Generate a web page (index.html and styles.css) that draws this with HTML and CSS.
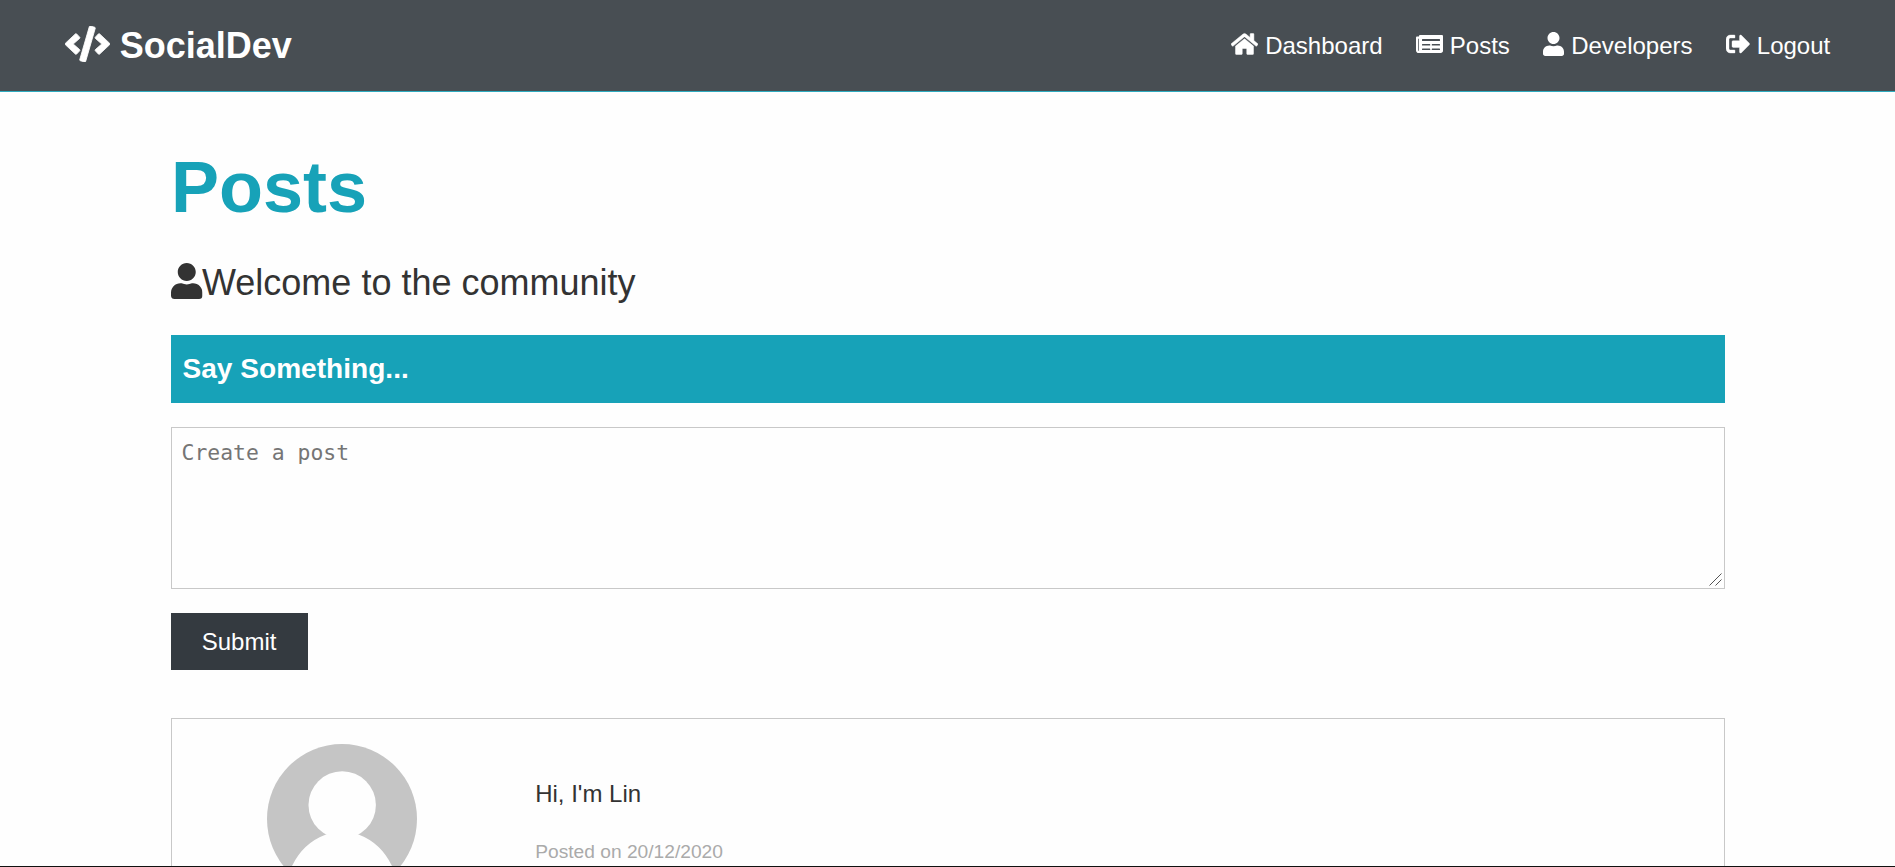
FILE: index.html
```html
<!DOCTYPE html>
<html lang="en">
<head>
<meta charset="utf-8">
<title>SocialDev</title>
<link rel="stylesheet" href="styles.css">
</head>
<body>
<svg class="sprite" aria-hidden="true">
  <symbol id="code" viewBox="0 0 640 512"><path stroke="currentColor" stroke-width="12" d="M278.900 511.500l-61-17.700c-6.400-1.800-10-8.500-8.200-14.900L346.200 8.700c1.800-6.400 8.500-10 14.900-8.200l61 17.700c6.400 1.800 10 8.500 8.200 14.900L293.800 503.300c-1.900 6.400-8.500 10.100-14.900 8.200zm-114-112.200l43.500-46.400c4.600-4.900 4.300-12.700-.8-17.200L117 256l90.600-79.700c5.100-4.500 5.500-12.300.8-17.200l-43.500-46.400c-4.500-4.800-12.100-5.100-17-.5L3.800 247.200c-5.100 4.700-5.100 12.800 0 17.500l144.100 135.100c4.900 4.600 12.500 4.400 17-.5zm327.200.6l144.100-135.100c5.100-4.700 5.100-12.800 0-17.500L492.100 112.100c-4.800-4.500-12.400-4.300-17 .5L431.600 159c-4.600 4.900-4.300 12.700.8 17.200L523 256l-90.600 79.700c-5.100 4.500-5.500 12.300-.8 17.200l43.500 46.400c4.500 4.900 12.100 5.100 17 .6z"/></symbol>
  <symbol id="home" viewBox="0 0 576 512"><path stroke="currentColor" stroke-width="10" d="M280.370 148.260L96 300.110V464a16 16 0 0 0 16 16l112.060-.29a16 16 0 0 0 15.920-16V368a16 16 0 0 1 16-16h64a16 16 0 0 1 16 16v95.640a16 16 0 0 0 16 16.050L464 480a16 16 0 0 0 16-16V300L295.670 148.260a12.190 12.190 0 0 0-15.300 0zM571.600 251.470L488 182.560V44.050a12 12 0 0 0-12-12h-56a12 12 0 0 0-12 12v72.610L318.470 43a48 48 0 0 0-61 0L4.340 251.470a12 12 0 0 0-1.600 16.900l25.500 31A12 12 0 0 0 45.150 301l235.220-193.740a12.190 12.190 0 0 1 15.300 0L530.900 301a12 12 0 0 0 16.900-1.600l25.500-31a12 12 0 0 0-1.700-16.930z"/></symbol>
  <symbol id="news" viewBox="0 0 576 512"><path fill-rule="evenodd" d="M552 64H88c-13.255 0-24 10.745-24 24v8H24c-13.255 0-24 10.745-24 24v272c0 30.928 25.072 56 56 56h472c26.510 0 48-21.490 48-48V88c0-13.255-10.745-24-24-24zM56 400a8 8 0 0 1-8-8V144h16v248a8 8 0 0 1-8 8zM140 150h360q12 0 12 12v18q0 12-12 12H140q-12 0-12-12v-18q0-12 12-12zM136 256h160q8 0 8 8v16q0 8-8 8H136q-8 0-8-8v-16q0-8 8-8zM344 256h160q8 0 8 8v16q0 8-8 8H344q-8 0-8-8v-16q0-8 8-8zM136 352h160q8 0 8 8v16q0 8-8 8H136q-8 0-8-8v-16q0-8 8-8zM344 352h160q8 0 8 8v16q0 8-8 8H344q-8 0-8-8v-16q0-8 8-8z"/></symbol>
  <symbol id="user" viewBox="0 0 448 512"><path d="M224 256c70.700 0 128-57.300 128-128S294.700 0 224 0 96 57.300 96 128s57.300 128 128 128zm89.600 32h-16.700c-22.200 10.200-46.900 16-72.900 16s-50.600-5.800-72.900-16h-16.700C60.200 288 0 348.200 0 422.400V464c0 26.500 21.500 48 48 48h352c26.500 0 48-21.500 48-48v-41.600c0-74.200-60.200-134.400-134.400-134.400z"/></symbol>
  <symbol id="logout" viewBox="0 0 512 512"><path stroke="currentColor" stroke-width="8" d="M497 273L329 441c-15 15-41 4.500-41-17v-96H152c-13.300 0-24-10.700-24-24v-96c0-13.300 10.700-24 24-24h136V88c0-21.400 25.900-32 41-17l168 168c9.300 9.400 9.300 24.600 0 34zM192 436v-40c0-6.600-5.400-12-12-12H96c-17.700 0-32-14.300-32-32V160c0-17.700 14.300-32 32-32h84c6.600 0 12-5.400 12-12V76c0-6.600-5.400-12-12-12H96c-53 0-96 43-96 96v192c0 53 43 96 96 96h84c6.600 0 12-5.400 12-12z"/></symbol>
</svg>

<nav class="navbar">
  <h1 class="brand"><svg class="icon icon-code"><use href="#code"/></svg> SocialDev</h1>
  <ul class="menu">
    <li><a href="#"><svg class="icon icon-wide"><use href="#home"/></svg> Dashboard</a></li>
    <li><a href="#"><svg class="icon icon-wide"><use href="#news"/></svg> Posts</a></li>
    <li><a href="#"><svg class="icon icon-user"><use href="#user"/></svg> Developers</a></li>
    <li><a href="#"><svg class="icon"><use href="#logout"/></svg> Logout</a></li>
  </ul>
</nav>

<main class="container">
  <h1 class="title">Posts</h1>
  <p class="lead"><svg class="icon icon-user"><use href="#user"/></svg>Welcome to the community</p>
  <div class="banner"><h3>Say Something...</h3></div>
  <form class="post-form">
    <div class="field">
      <textarea placeholder="Create a post"></textarea>
      <svg class="grip" viewBox="0 0 13 13"><path d="M.5 12.500L12.500.5M6.500 12.500L12.500 6.500"/></svg>
    </div>
    <button type="button" class="btn">Submit</button>
  </form>
  <article class="post">
    <div class="author">
      <svg class="avatar" viewBox="0 0 150 150">
        <clipPath id="round"><circle cx="75" cy="75" r="75"/></clipPath>
        <g clip-path="url(#round)">
          <rect width="150" height="150" fill="#c5c5c5"/>
          <circle cx="75.200" cy="61" r="33.700" fill="#fefefe"/>
          <path d="M59 90.500Q75 84 91.500 90.500Q114 99 125 122V150H25V122Q36 99 59 90.500Z" fill="#fefefe"/>
        </g>
      </svg>
    </div>
    <div class="body">
      <p class="text">Hi, I'm Lin</p>
      <p class="date">Posted on 20/12/2020</p>
    </div>
  </article>
</main>
<footer class="edge"></footer>
</body>
</html>
```
FILE: styles.css
```css
* { box-sizing: border-box; margin: 0; padding: 0; }
html { font-size: 24px; }
body {
  display: flex;
  flex-direction: column;
  height: 867px;
  overflow: hidden;
  font-family: "Liberation Sans", Arial, sans-serif;
  font-size: 1rem;
  line-height: 1.6;
  color: #333;
  background: #fefefe;
}
.sprite { position: absolute; width: 0; height: 0; }
.icon { width: 1em; height: 1em; fill: currentColor; overflow: visible; vertical-align: -0.085em; }
.icon-code { width: 1.25em; vertical-align: -0.125em; }
.icon-wide { width: 1.125em; margin-left: -0.5px; margin-right: 0.5px; }
.icon-user { width: 0.875em; }

.navbar {
  display: flex;
  flex: none;
  justify-content: space-between;
  align-items: center;
  height: 92px;
  padding: 0 64.8px;
  color: #fff;
  background: #484e53;
  border-bottom: 1px solid #2eabbf;
}
.brand { font-size: 1.5rem; white-space: nowrap; }
.menu { display: flex; gap: 33.6px; padding-top: 2px; list-style: none; }
.menu a { color: #fff; text-decoration: none; white-space: nowrap; }

.container {
  flex: 1;
  min-height: 0;
  width: 1650px;
  margin: 0 auto;
  padding: 52px 47.5px 0 48.5px;
  overflow: hidden;
}
.title { font-size: 3rem; line-height: 1.2; margin-bottom: 24px; color: #17a2b8; }
.lead { font-size: 1.5rem; height: 57px; margin-bottom: 24px; }
.lead .icon { vertical-align: -0.11em; margin-right: -0.5px; }
.banner { height: 68px; padding: 11.5px; color: #fff; background: #17a2b8; }
.banner h3 { font-size: 1.17rem; }
.post-form { display: flex; flex-direction: column; align-items: flex-start; gap: 24px; margin: 23.600px 0 48px; }
.field { position: relative; width: 100%; }
.field textarea {
  display: block;
  width: 100%;
  height: 162px;
  padding: 11.6px 9.6px 9.6px;
  border: 1px solid #c8c8c8;
  background: #fefefe;
  font-family: "DejaVu Sans Mono", monospace;
  font-size: 21.4px;
  resize: none;
}
.field textarea::placeholder { color: #757575; }
.grip {
  position: absolute;
  right: 3px;
  bottom: 3px;
  width: 13px;
  height: 13px;
  fill: none;
  stroke: #555;
}
.btn {
  height: 57px;
  padding: 1px 31.2px 0 30.7px;
  border: 0;
  font: inherit;
  color: #fff;
  background: #343a40;
}
.post {
  display: grid;
  grid-template-columns: 1fr 4fr;
  gap: 48px;
  height: 320px;
  padding: 24px;
  border: 1px solid #c8c8c8;
}
.author { padding-left: 1px; text-align: center; }
.avatar { width: 150px; height: 150px; margin-top: 0.6px; }
.body { padding-top: 32px; }
.text { margin-bottom: 24px; }
.date { font-size: 0.8rem; color: #aaa; }
.edge { flex: none; height: 1px; background: #111; }
```
